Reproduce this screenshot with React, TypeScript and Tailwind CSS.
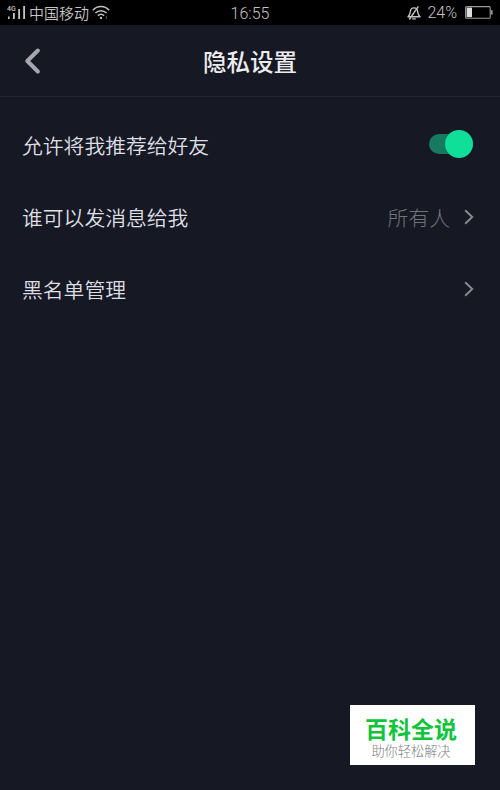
import { useState, type ReactNode } from "react";

function SignalIcon() {
  return (
    <svg width="20" height="15" viewBox="0 0 20 15" fill="#c4c4c4">
      <text x="0" y="5.5" fontSize="7" fontWeight="500" fontFamily="Roboto, sans-serif">
        4G
      </text>
      <rect x="1" y="11.5" width="1.6" height="2.5" />
      <rect x="6" y="8" width="1.8" height="6" />
      <rect x="11.2" y="4" width="1.8" height="10" />
      <rect x="16.2" y="1" width="1.8" height="13" />
    </svg>
  );
}

function WifiIcon() {
  return (
    <svg width="18" height="15" viewBox="0 0 18 15" fill="none" stroke="#c4c4c4" strokeWidth="1.5">
      <path d="M.8 5.2C5.4.4 12.6.4 17.2 5.2M3.4 8c3.2-3.1 8-3.1 11.2 0M5.9 10.6c1.8-1.6 4.4-1.6 6.2 0" />
      <circle cx="9" cy="12.9" r="1.2" fill="#c4c4c4" stroke="none" />
      <path d="M14.4 11v3" stroke="#555" strokeWidth="1" />
    </svg>
  );
}

function MutedBellIcon() {
  return (
    <svg width="14" height="14" viewBox="0 0 14 14" fill="none" stroke="#c4c4c4" strokeWidth="1.4" strokeLinecap="round" strokeLinejoin="round">
      <path d="M1 10.8c1.4-1.3 2.1-2.8 2.3-5C3.5 3.3 5 1.9 7 1.9s3.5 1.4 3.7 3.9c.2 2.2.9 3.7 2.3 5zM5.7 12.9h2.6M11 .8 2.6 13" />
    </svg>
  );
}

function BatteryIcon() {
  return (
    <svg width="28" height="13" viewBox="0 0 28 13" fill="none">
      <rect x="0.6" y="0.6" width="24.6" height="11.6" rx="1" stroke="#999" strokeWidth="1.1" />
      <rect x="1.6" y="1.6" width="5.4" height="9.6" fill="#ddd" />
      <rect x="25.8" y="4.2" width="1.8" height="4.4" fill="#999" />
    </svg>
  );
}

function Chevron() {
  return (
    <svg width="10" height="16" viewBox="0 0 10 16" fill="none" stroke="#868890" strokeWidth="2">
      <path d="m1.2 1.2 7 6.8-7 6.8" />
    </svg>
  );
}

function StatusBar() {
  return (
    <div className="grid h-[25px] grid-cols-[1fr_auto_1fr] items-center bg-black pr-[7px] pl-[7px] text-[#c4c4c4]">
      <div className="flex items-center">
        <SignalIcon />
        <span className="ml-[2px] text-[15px] leading-[25px] font-[350]">中国移动</span>
        <span className="ml-[3px]">
          <WifiIcon />
        </span>
      </div>
      <span className="pt-[3px] font-[Roboto] text-[16px] leading-[22px] font-[350]">16:55</span>
      <div className="flex items-center justify-end">
        <MutedBellIcon />
        <span className="mr-[8px] ml-[6px] pt-px font-[Roboto] text-[16px] leading-[24px] font-[350]">24%</span>
        <BatteryIcon />
      </div>
    </div>
  );
}

function Header() {
  return (
    <header className="grid h-[72px] grid-cols-[1fr_auto_1fr] items-center border-b border-[#262831] px-6">
      <button type="button" aria-label="返回">
        <svg width="18" height="26" viewBox="0 0 18 26" fill="none" stroke="#a6a7ac" strokeWidth="4" strokeLinecap="round" strokeLinejoin="round">
          <path d="M13.8 2.5 3.3 13l10.5 10.5" />
        </svg>
      </button>
      <h1 className="pt-px text-[23.5px] leading-[36px] font-medium text-[#ececee]">隐私设置</h1>
    </header>
  );
}

function Toggle({ on, onChange }: { on: boolean; onChange: () => void }) {
  return (
    <button
      type="button"
      role="switch"
      aria-checked={on}
      onClick={onChange}
      className={`mb-[2px] flex h-[20px] w-[44px] items-center rounded-full ${on ? "justify-end bg-[#17795f]" : "bg-[#3a3c45]"}`}
    >
      <span className={`size-7 shrink-0 rounded-full ${on ? "bg-[#0fdf98]" : "bg-[#a6a7ac]"}`} />
    </button>
  );
}

function Row({ label, children }: { label: string; children: ReactNode }) {
  return (
    <li className="flex h-[72px] items-center justify-between pr-[27px] pl-[22px]">
      <span className="pt-px text-[20.8px] leading-[31px] font-[350] text-[#dedfe3]">{label}</span>
      <div className="flex items-center">{children}</div>
    </li>
  );
}

export default function App() {
  const [recommend, setRecommend] = useState(true);

  return (
    <div className="flex h-[790px] w-[500px] flex-col overflow-hidden bg-[#161823] font-['Noto_Sans_CJK_SC',sans-serif]">
      <StatusBar />
      <Header />
      <ul className="pt-3">
        <Row label="允许将我推荐给好友">
          <Toggle on={recommend} onChange={() => setRecommend(!recommend)} />
        </Row>
        <Row label="谁可以发消息给我">
          <span className="mr-[14px] pt-px text-[20.8px] leading-[31px] font-light text-[#72747c]">所有人</span>
          <span className="-mr-px">
            <Chevron />
          </span>
        </Row>
        <Row label="黑名单管理">
          <span className="-mr-px">
            <Chevron />
          </span>
        </Row>
      </ul>
      <div className="mt-auto mr-[25px] mb-[25px] flex h-[60px] w-[125px] flex-col items-center self-end bg-white pt-[8px] pr-[3px]">
        <span className="text-[23px] leading-[31px] font-bold text-[#10c43c]">百科全说</span>
        <span className="text-[13.2px] leading-[14px] font-light text-[#808080]">助你轻松解决</span>
      </div>
    </div>
  );
}
